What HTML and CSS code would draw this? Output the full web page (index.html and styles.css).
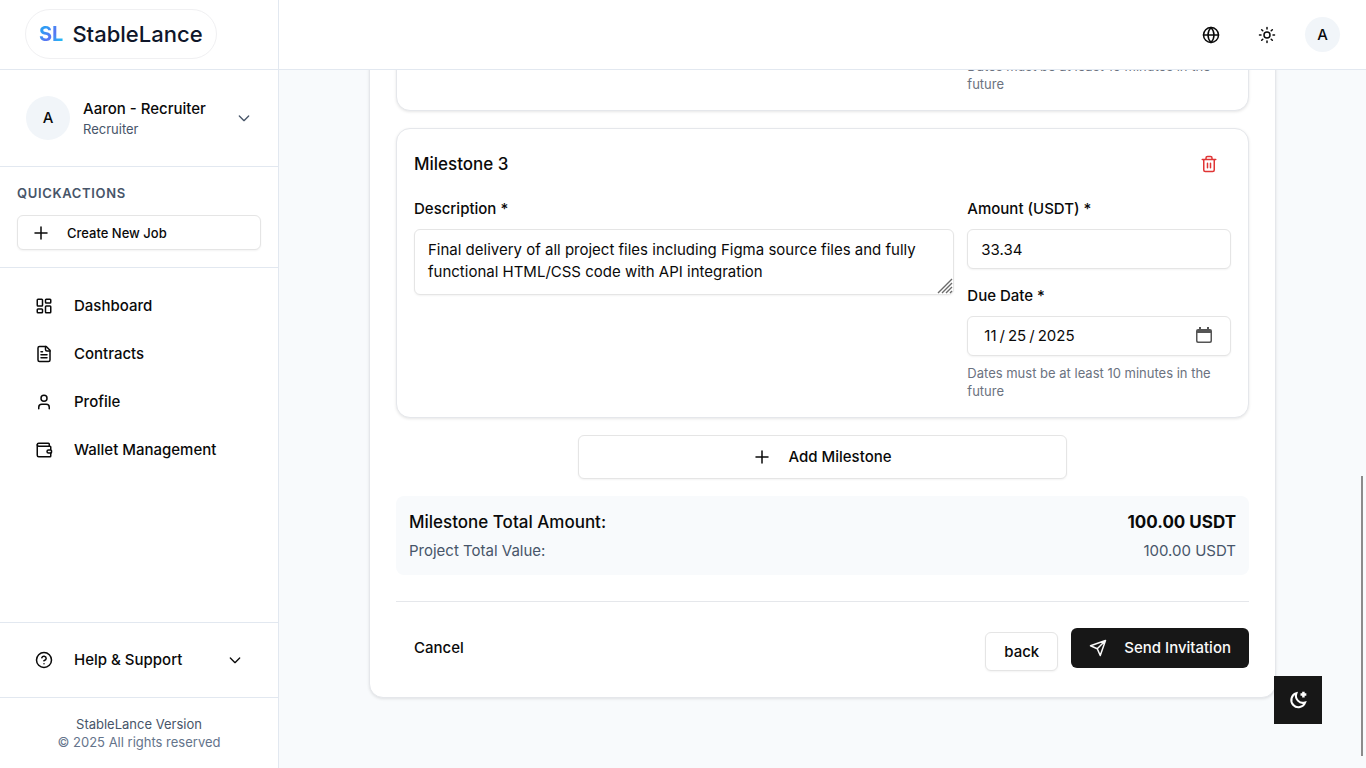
FILE: index.html
```html
<!DOCTYPE html>
<html lang="en">
<head>
  <meta charset="UTF-8" />
  <meta name="viewport" content="width=device-width, initial-scale=1" />
  <title>StableLance - Send Invitation</title>
  <link rel="stylesheet" href="styles.css">
</head>
<body>
  <aside class="sidebar">
    <div class="brand">
      <a href="#" class="logo"><span class="logo-mark">SL</span><span class="logo-name">StableLance</span></a>
    </div>

    <button type="button" class="account">
      <span class="avatar avatar-lg">A</span>
      <span class="account-text">
        <span class="account-name">Aaron - Recruiter</span>
        <span class="account-role">Recruiter</span>
      </span>
      <svg class="icon icon-sm" viewBox="0 0 24 24"><path d="m5 9 7 7 7-7"/></svg>
    </button>

    <div class="quick">
      <h2>QUICKACTIONS</h2>
      <button type="button" class="btn btn-outline btn-job">
        <svg class="icon" viewBox="0 0 24 24"><path d="M4 12h16M12 4v16"/></svg>
        Create New Job
      </button>
    </div>

    <nav class="nav">
      <a href="#">
        <svg class="icon" viewBox="0 0 24 24"><rect x="3" y="3" width="7" height="9" rx="1"/><rect x="14" y="3" width="7" height="5" rx="1"/><rect x="14" y="12" width="7" height="9" rx="1"/><rect x="3" y="16" width="7" height="5" rx="1"/></svg>
        Dashboard
      </a>
      <a href="#">
        <svg class="icon" viewBox="0 0 24 24"><path d="M15 2H6a2 2 0 0 0-2 2v16a2 2 0 0 0 2 2h12a2 2 0 0 0 2-2V7Z"/><path d="M14 2v4a2 2 0 0 0 2 2h4M10 9H8M16 13H8M16 17H8"/></svg>
        Contracts
      </a>
      <a href="#">
        <svg class="icon" viewBox="0 0 24 24"><path d="M19 21v-2a4 4 0 0 0-4-4H9a4 4 0 0 0-4 4v2"/><circle cx="12" cy="7" r="4"/></svg>
        Profile
      </a>
      <a href="#">
        <svg class="icon" viewBox="0 0 24 24"><path d="M19 7V4a1 1 0 0 0-1-1H5a2 2 0 0 0 0 4h15a1 1 0 0 1 1 1v4h-3a2 2 0 0 0 0 4h3a1 1 0 0 0 1-1v-2a1 1 0 0 0-1-1"/><path d="M3 5v14a2 2 0 0 0 2 2h15a1 1 0 0 0 1-1v-4"/></svg>
        Wallet Management
      </a>
    </nav>

    <button type="button" class="help">
      <svg class="icon" viewBox="0 0 24 24"><circle cx="12" cy="12" r="10"/><path d="M9.09 9a3 3 0 0 1 5.83 1c0 2-3 3-3 3M12 17h.01"/></svg>
      <span>Help &amp; Support</span>
      <svg class="icon icon-sm" viewBox="0 0 24 24"><path d="m5 9 7 7 7-7"/></svg>
    </button>

    <footer class="version">
      <p>StableLance Version</p>
      <p class="rights">© 2025 All rights reserved</p>
    </footer>
  </aside>

  <div class="page">
    <header class="topbar">
      <button type="button" class="icon-btn" aria-label="Language">
        <svg class="icon" viewBox="0 0 24 24"><circle cx="12" cy="12" r="10"/><path d="M12 2a14.5 14.5 0 0 0 0 20 14.5 14.5 0 0 0 0-20M2 12h20"/></svg>
      </button>
      <button type="button" class="icon-btn" aria-label="Theme">
        <svg class="icon" viewBox="0 0 24 24"><circle cx="12" cy="12" r="4"/><path d="M12 2v2M12 20v2M4.93 4.93l1.41 1.41M17.66 17.66l1.41 1.41M2 12h2M20 12h2M6.34 17.66l-1.41 1.41M19.07 4.93l-1.41 1.41"/></svg>
      </button>
      <button type="button" class="avatar" aria-label="Account">A</button>
    </header>

    <main class="content">
      <form class="card">
        <section class="milestone">
          <div class="fields">
            <div class="field field-date">
              <p class="hint">Dates must be at least 10 minutes in the future</p>
            </div>
          </div>
        </section>

        <section class="milestone">
          <div class="milestone-head">
            <h3>Milestone 3</h3>
            <button type="button" class="icon-btn delete" aria-label="Delete milestone">
              <svg class="icon" viewBox="0 0 24 24"><path d="M3 6h18M19 6v14a2 2 0 0 1-2 2H7a2 2 0 0 1-2-2V6M8 6V4a2 2 0 0 1 2-2h4a2 2 0 0 1 2 2v2M10 11v6M14 11v6"/></svg>
            </button>
          </div>
          <div class="fields">
            <div class="field field-desc">
              <label for="desc">Description *</label>
              <div class="textarea-wrap">
                <textarea id="desc" rows="2">Final delivery of all project files including Figma source files and fully functional HTML/CSS code with API integration</textarea>
                <svg class="grip" viewBox="0 0 16 16"><path d="M1 15 15 1M5 15 15 5M9 15l6-6M13 15l2-2"/></svg>
              </div>
            </div>
            <div class="field-side">
              <div class="field">
                <label for="amount">Amount (USDT) *</label>
                <input type="text" id="amount" value="33.34" inputmode="decimal" />
              </div>
              <div class="field">
                <label for="due">Due Date *</label>
                <input type="date" id="due" value="2025-11-25" />
                <p class="hint">Dates must be at least 10 minutes in the future</p>
              </div>
            </div>
          </div>
        </section>

        <button type="button" class="btn btn-outline btn-add">
          <svg class="icon" viewBox="0 0 24 24"><path d="M4 12h16M12 4v16"/></svg>
          Add Milestone
        </button>

        <div class="totals">
          <div class="total-main"><span>Milestone Total Amount:</span><strong>100.00 USDT</strong></div>
          <div class="total-sub"><span>Project Total Value:</span><span>100.00 USDT</span></div>
        </div>

        <div class="actions">
          <button type="button" class="btn btn-cancel">Cancel</button>
          <button type="button" class="btn btn-outline btn-back">back</button>
          <button type="submit" class="btn btn-send">
            <svg class="icon" viewBox="0 0 24 24"><path d="m22 2-7 20-4-9-9-4ZM22 2 11 13"/></svg>
            Send Invitation
          </button>
        </div>
      </form>
    </main>
  </div>

  <div class="scroll-thumb"></div>
  <button type="button" class="dark-toggle" aria-label="Dark mode">
    <svg viewBox="0 0 24 24"><path d="M10 4a8.500 8.500 0 1 0 10.500 11A8.500 8.500 0 0 1 10 4Z"/><path class="star" d="M18.500 2v7M15 5.500h7"/></svg>
  </button>
</body>
</html>
```

FILE: styles.css
```css
* {
  box-sizing: border-box;
}

body {
  margin: 0;
  height: 100vh;
  display: flex;
  overflow: hidden;
  font-family: Inter, 'Liberation Sans', sans-serif;
  font-size: 15px;
  line-height: 22px;
  color: #0a0a0a;
  background: #f8fafc;
}

h2, h3, p {
  margin: 0;
}

a {
  color: inherit;
  text-decoration: none;
}

button, input, textarea {
  font: inherit;
  color: inherit;
}

button {
  background: none;
  border: none;
  padding: 0;
  cursor: pointer;
}

.icon {
  width: 18px;
  height: 18px;
  flex: none;
  fill: none;
  stroke: currentColor;
  stroke-width: 2;
  stroke-linecap: round;
  stroke-linejoin: round;
}

.icon-sm {
  width: 16px;
  height: 16px;
}

.avatar {
  width: 35px;
  height: 35px;
  flex: none;
  display: flex;
  align-items: center;
  justify-content: center;
  border-radius: 50%;
  background: #f1f5f9;
  font-weight: 500;
}

.avatar-lg {
  width: 44px;
  height: 44px;
}

/* sidebar */
.sidebar {
  width: 279px;
  flex: none;
  display: flex;
  flex-direction: column;
  background: #fff;
  border-right: 1px solid #e2e8f0;
}

.brand {
  height: 70px;
  display: flex;
  align-items: center;
  padding: 0 25px 2px;
  border-bottom: 1px solid #e2e8f0;
}

.logo {
  height: 50px;
  display: flex;
  align-items: center;
  gap: 9px;
  padding: 0 13px;
  border: 1px solid #f0f0f2;
  border-radius: 25px;
}

.logo-mark {
  font-size: 20px;
  font-weight: 700;
  background: linear-gradient(135deg, #2f9cf4 25%, #5b74f2 55%, #22b8f5 85%);
  -webkit-background-clip: text;
  background-clip: text;
  color: transparent;
}

.logo-name {
  font-size: 22px;
  font-weight: 500;
  color: #0f172a;
}

.account {
  height: 97px;
  display: flex;
  align-items: center;
  gap: 13px;
  padding: 0 26px;
  border-bottom: 1px solid #e2e8f0;
  text-align: left;
}

.account-text {
  flex: 1;
  display: flex;
  flex-direction: column;
}

.account-name {
  font-weight: 500;
}

.account-role {
  font-size: 13px;
  line-height: 18px;
  color: #475569;
}

.account .icon {
  color: #475569;
}

.quick {
  padding: 17px;
  border-bottom: 1px solid #e2e8f0;
}

.quick h2 {
  margin-bottom: 13px;
  font-size: 13px;
  line-height: 18px;
  font-weight: 600;
  letter-spacing: 0.05em;
  color: #475569;
}

.btn {
  height: 40px;
  display: flex;
  align-items: center;
  justify-content: center;
  gap: 17px;
  padding: 0 18px;
  border-radius: 6px;
  font-weight: 500;
}

.btn-outline {
  background: #fff;
  border: 1px solid #e5e5e5;
  box-shadow: 0 1px 2px rgba(0, 0, 0, 0.05);
}

.btn-job {
  width: 100%;
  height: 35px;
  justify-content: flex-start;
  padding: 0 14px;
  font-size: 13px;
}

.nav {
  flex: 1;
  display: flex;
  flex-direction: column;
  gap: 4px;
  padding: 16px 17px;
}

.nav a, .help {
  height: 44px;
  display: flex;
  align-items: center;
  gap: 21px;
  padding: 0 18px;
  font-weight: 500;
}

.help {
  height: 76px;
  padding: 0 35px;
  border-top: 1px solid #e2e8f0;
  border-bottom: 1px solid #e2e8f0;
  text-align: left;
}

.help span {
  flex: 1;
}

.version {
  padding: 17px;
  text-align: center;
  font-size: 13px;
  line-height: 18px;
  color: #475569;
}

.rights {
  color: #64748b;
}

/* page */
.page {
  flex: 1;
  min-width: 0;
  display: flex;
  flex-direction: column;
}

.topbar {
  height: 70px;
  flex: none;
  display: flex;
  align-items: center;
  justify-content: flex-end;
  gap: 21px;
  padding: 0 26px;
  background: #fff;
  border-bottom: 1px solid #e2e8f0;
}

.icon-btn {
  width: 35px;
  height: 35px;
  display: flex;
  align-items: center;
  justify-content: center;
}

.content {
  flex: 1;
  min-height: 0;
  display: flex;
  flex-direction: column;
  justify-content: flex-end;
  align-items: center;
  padding: 0 26px 70px;
  overflow: hidden;
}

.card {
  width: 100%;
  max-width: 907px;
  flex: none;
  display: flex;
  flex-direction: column;
  gap: 17px;
  padding: 26px;
  background: #fff;
  border: 1px solid #e5e7eb;
  border-radius: 14px;
  box-shadow: 0 1px 3px rgba(0, 0, 0, 0.1);
}

.milestone {
  padding: 17px;
  background: #fff;
  border: 1px solid #e5e7eb;
  border-radius: 14px;
  box-shadow: 0 1px 3px rgba(0, 0, 0, 0.1);
}

.milestone-head {
  display: flex;
  align-items: center;
  justify-content: space-between;
  margin-bottom: 17px;
  padding-right: 5px;
}

.milestone-head h3 {
  font-size: 17px;
  font-weight: 500;
}

.delete {
  color: #e03535;
}

.fields {
  display: grid;
  grid-template-columns: repeat(3, 1fr);
  gap: 13px;
}

.field-desc {
  grid-column: span 2;
}

.field-date {
  grid-column: 3;
}

.field-side {
  display: flex;
  flex-direction: column;
  gap: 16px;
}

.field label {
  display: block;
  margin-bottom: 9px;
  font-weight: 500;
}

.field input, .field textarea {
  display: block;
  width: 100%;
  background: #fff;
  border: 1px solid #e5e5e5;
  border-radius: 6px;
  box-shadow: 0 1px 2px rgba(0, 0, 0, 0.05);
  outline: none;
}

.field input {
  height: 40px;
  padding: 0 13px;
}

.field textarea {
  height: 66px;
  padding: 9px 13px;
  resize: none;
}

.field input[type="date"] {
  padding: 0 17px 0 15px;
}

input::-webkit-datetime-edit-text {
  padding: 0 2px;
}

input::-webkit-calendar-picker-indicator {
  width: 18px;
  height: 18px;
  padding: 0;
  background: url("data:image/svg+xml,%3Csvg xmlns='http://www.w3.org/2000/svg' viewBox='0 0 18 18'%3E%3Cpath fill='%23555' d='M3 2h1V0h2v2h6V0h2v2h1q2 0 2 2v10q0 2-2 2H3q-2 0-2-2V4q0-2 2-2ZM2.500 6v7.500q0 1 1 1h11q1 0 1-1V6Z'/%3E%3C/svg%3E") center / 18px no-repeat;
}

.textarea-wrap {
  position: relative;
}

.grip {
  position: absolute;
  right: 1px;
  bottom: 1px;
  width: 16px;
  height: 16px;
  fill: none;
  stroke: #6b6b6b;
  stroke-width: 1.4;
}

.hint {
  margin-top: 8px;
  font-size: 13px;
  line-height: 18px;
  color: #6b7280;
}

.btn-add {
  width: 489px;
  max-width: 100%;
  height: 44px;
  align-self: center;
}

.totals {
  padding: 13px;
  background: #f8fafc;
  border-radius: 8px;
}

.totals div {
  display: flex;
  justify-content: space-between;
}

.total-main {
  font-size: 17px;
  line-height: 27px;
  font-weight: 500;
}

.total-main strong {
  font-weight: 700;
}

.total-sub {
  margin-top: 4px;
  color: #475569;
}

.actions {
  display: flex;
  align-items: flex-start;
  gap: 13px;
  margin-top: 9px;
  padding-top: 26px;
  border-top: 1px solid #e5e7eb;
}

.btn-cancel {
  margin-right: auto;
}

.btn-back {
  height: 39px;
  margin-top: 4px;
}

.btn-send {
  background: #171717;
  color: #fafafa;
}

/* floating */
.scroll-thumb {
  position: absolute;
  right: 3px;
  bottom: 12px;
  width: 2px;
  height: 280px;
  background: #8b8b8b;
}

.dark-toggle {
  position: absolute;
  right: 44px;
  bottom: 44px;
  width: 48px;
  height: 48px;
  display: flex;
  align-items: center;
  justify-content: center;
  background: #171717;
}

.dark-toggle svg {
  width: 20px;
  height: 20px;
  fill: none;
  stroke: #fff;
  stroke-width: 2.5;
}

.dark-toggle .star {
  stroke-width: 3;
}
```
